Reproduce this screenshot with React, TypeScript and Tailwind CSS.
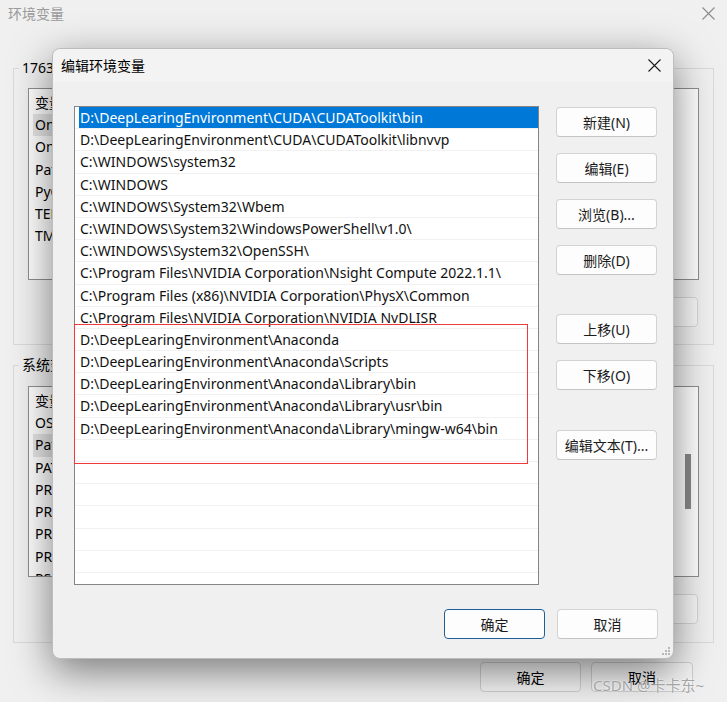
const paths = [
  'D:\\DeepLearingEnvironment\\CUDA\\CUDAToolkit\\bin',
  'D:\\DeepLearingEnvironment\\CUDA\\CUDAToolkit\\libnvvp',
  'C:\\WINDOWS\\system32',
  'C:\\WINDOWS',
  'C:\\WINDOWS\\System32\\Wbem',
  'C:\\WINDOWS\\System32\\WindowsPowerShell\\v1.0\\',
  'C:\\WINDOWS\\System32\\OpenSSH\\',
  'C:\\Program Files\\NVIDIA Corporation\\Nsight Compute 2022.1.1\\',
  'C:\\Program Files (x86)\\NVIDIA Corporation\\PhysX\\Common',
  'C:\\Program Files\\NVIDIA Corporation\\NVIDIA NvDLISR',
  'D:\\DeepLearingEnvironment\\Anaconda',
  'D:\\DeepLearingEnvironment\\Anaconda\\Scripts',
  'D:\\DeepLearingEnvironment\\Anaconda\\Library\\bin',
  'D:\\DeepLearingEnvironment\\Anaconda\\Library\\usr\\bin',
  'D:\\DeepLearingEnvironment\\Anaconda\\Library\\mingw-w64\\bin',
  '', '', '', '', '', '', '',
]

const userVars = ['OneDrive', 'OneDriveConsumer', 'Path', 'PyCharm', 'TEMP', 'TMP']
const sysVars = ['OS', 'Path', 'PATHEXT', 'PROCESSOR_ARCHITECTURE', 'PROCESSOR_IDENTIFIER', 'PROCESSOR_LEVEL', 'PROCESSOR_REVISION', 'PSModulePath']

function CloseIcon({ color }: { color: string }) {
  return (
    <svg width="13" height="13" viewBox="0 0 13 13">
      <path d="M0.5 0.5 L12.5 12.5 M12.5 0.5 L0.5 12.5" stroke={color} strokeWidth="1.1" fill="none" />
    </svg>
  )
}

function Btn({ label, primary = false }: { label: string; primary?: boolean }) {
  return (
    <button
      className={`h-[30px] w-[101px] rounded-[4px] border bg-[#fdfdfd] text-[14px] text-[#1b1b1b] ${
        primary ? 'border-[#1f5f99]' : 'border-[#d3d3d3] border-b-[#c4c4c4]'
      }`}
    >
      {label}
    </button>
  )
}

function BgList({ items, hl, scroll }: { items: string[]; hl: number; scroll?: boolean }) {
  return (
    <div className="relative mx-[14px] flex-1 overflow-hidden border border-[#8f8f8f] bg-white pl-[4px] pt-[3px]">
      <div className="h-[22px] pl-[2px] leading-[22px]">变量</div>
      {items.map((v, i) => (
        <div
          key={v}
          className={`h-[22.3px] w-fit pl-[2px] pr-[6px] leading-[22px] ${i === hl ? 'bg-[#e6e6e6]' : ''}`}
        >
          {v}
        </div>
      ))}
      {scroll && <div className="absolute right-[7px] top-[67px] h-[55px] w-[6px] bg-[#8a8a8a]" />}
    </div>
  )
}

export default function App() {
  return (
    <div className="relative h-[702px] w-[727px] overflow-hidden bg-[#f0f0f0] font-['Noto_Sans','Noto_Sans_CJK_SC',sans-serif] text-[14px] text-black">
      {/* background window: 环境变量 */}
      <div className="flex h-full flex-col">
        <div className="flex h-[26px] items-center justify-between pl-[8px] pr-[12px] pt-[1px]">
          <span className="text-[14px] text-[#9a9a9a]">环境变量</span>
          <CloseIcon color="#8c8c8c" />
        </div>

        <div className="mx-[13px] mt-[42px] flex h-[277px] flex-col border border-[#dadada]">
          <div className="-mt-[11px] ml-[5px] w-fit bg-[#f0f0f0] px-[3px] leading-[20px]">17637 的用户变量(U)</div>
          <div className="mt-[10px] flex h-[192px]">
            <BgList items={userVars} hl={0} />
          </div>
          <div className="mr-[15px] mt-[17px] flex justify-end">
            <div className="h-[30px] w-[101px] rounded-[4px] border border-[#d6d6d6] bg-[#f7f7f7]" />
          </div>
        </div>

        <div className="mx-[13px] mt-[20px] flex h-[278px] flex-col border border-[#dadada]">
          <div className="-mt-[11px] ml-[5px] w-fit bg-[#f0f0f0] px-[3px] leading-[20px]">系统变量(S)</div>
          <div className="mt-[11px] flex h-[191px]">
            <BgList items={sysVars} hl={1} scroll />
          </div>
          <div className="mr-[15px] mt-[17px] flex justify-end">
            <div className="h-[30px] w-[101px] rounded-[4px] border border-[#d6d6d6] bg-[#f7f7f7]" />
          </div>
        </div>

        <div className="mr-[34px] mt-[19px] flex justify-end gap-[10px]">
          <div className="flex h-[30px] w-[101px] items-center justify-center rounded-[4px] border border-[#cfcfcf] bg-[#f4f4f4]">确定</div>
          <div className="flex h-[30px] w-[102px] items-center justify-center rounded-[4px] border border-[#cfcfcf] bg-[#f4f4f4]">取消</div>
        </div>
      </div>

      {/* front dialog: 编辑环境变量 */}
      <div className="absolute left-[52px] top-[48px] flex h-[611px] w-[622px] flex-col rounded-[8px] border border-[#bdbdbd] bg-[#f0f0f0] shadow-[0_12px_40px_rgba(0,0,0,0.5)]">
        <div className="flex h-[33px] items-center justify-between rounded-t-[8px] bg-[#f3f3f3] pl-[8px] pr-[12px]">
          <span className="text-[14px]">编辑环境变量</span>
          <CloseIcon color="#1b1b1b" />
        </div>

        <div className="flex pl-[21px] pt-[24px]">
          <div className="relative h-[479px] w-[465px] overflow-hidden border border-[#858585] bg-white">
            {paths.map((p, i) => (
              <div key={i} className="h-[22.2px] border-b border-[#f1f1f1]">
                <div
                  className={`ml-[4px] h-full pl-[1px] leading-[22px] ${
                    i === 0 ? 'bg-[#0078d7] text-white' : 'text-[#111]'
                  }`}
                >
                  {p}
                </div>
              </div>
            ))}
          </div>

          <div className="ml-[17px] flex flex-col pt-[1px]">
            <div className="flex flex-col gap-[16px]">
              <Btn label="新建(N)" />
              <Btn label="编辑(E)" />
              <Btn label="浏览(B)..." />
              <Btn label="删除(D)" />
            </div>
            <div className="mt-[39px] flex flex-col gap-[16px]">
              <Btn label="上移(U)" />
              <Btn label="下移(O)" />
            </div>
            <div className="mt-[40px]">
              <Btn label="编辑文本(T)..." />
            </div>
          </div>
        </div>

        <div className="mr-[15px] mt-[24px] flex justify-end gap-[12px]">
          <Btn label="确定" primary />
          <Btn label="取消" />
        </div>

        <svg className="absolute bottom-[3px] right-[3px]" width="8" height="8" viewBox="0 0 8 8">
          <rect x="6" y="0" width="2" height="2" fill="#b8b8b8" />
          <rect x="3" y="3" width="2" height="2" fill="#b8b8b8" />
          <rect x="6" y="3" width="2" height="2" fill="#b8b8b8" />
          <rect x="0" y="6" width="2" height="2" fill="#b8b8b8" />
          <rect x="3" y="6" width="2" height="2" fill="#b8b8b8" />
          <rect x="6" y="6" width="2" height="2" fill="#b8b8b8" />
        </svg>
      </div>

      {/* red annotation box */}
      <div className="absolute left-[74px] top-[324px] h-[140px] w-[454px] border border-[#f03a3a]" />

      {/* watermark */}
      <div className="absolute left-[593px] top-[674px] text-[15px] text-[#8f8f8f]/80 [text-shadow:0_0_2px_#ffffff]">
        CSDN @卡卡东~
      </div>
    </div>
  )
}
